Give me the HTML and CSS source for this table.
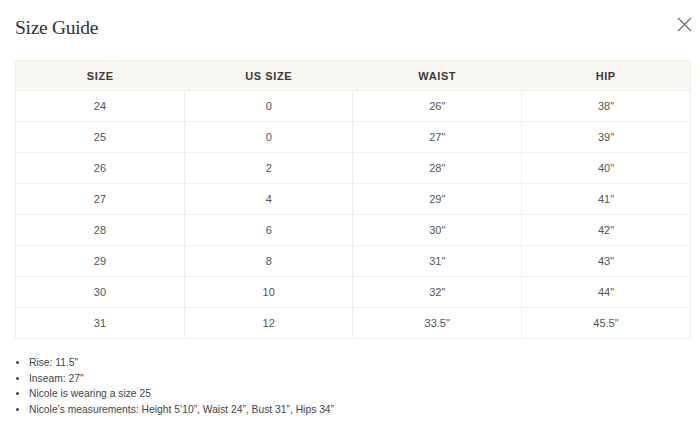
FILE: index.html
```html
<!DOCTYPE html>
<html>
<head>
<meta charset="utf-8">
<link rel="stylesheet" href="styles.css">
</head>
<body>
<div class="modal">
  <div class="head">
    <h1 class="title">Size Guide</h1>
    <button class="close" aria-label="Close">
      <svg width="15" height="15" viewBox="0 0 15 15"><path d="M1 1L14 14M14 1L1 14" stroke="#666" stroke-width="1.1" fill="none"/></svg>
    </button>
  </div>
  <table class="guide">
    <thead>
      <tr><th>SIZE</th><th>US SIZE</th><th>WAIST</th><th>HIP</th></tr>
    </thead>
    <tbody>
      <tr><td>24</td><td>0</td><td>26"</td><td>38"</td></tr>
      <tr><td>25</td><td>0</td><td>27"</td><td>39"</td></tr>
      <tr><td>26</td><td>2</td><td>28"</td><td>40"</td></tr>
      <tr><td>27</td><td>4</td><td>29"</td><td>41"</td></tr>
      <tr><td>28</td><td>6</td><td>30"</td><td>42"</td></tr>
      <tr><td>29</td><td>8</td><td>31"</td><td>43"</td></tr>
      <tr><td>30</td><td>10</td><td>32"</td><td>44"</td></tr>
      <tr><td>31</td><td>12</td><td>33.5"</td><td>45.5"</td></tr>
    </tbody>
  </table>
  <ul class="notes">
    <li>Rise: 11.5"</li>
    <li>Inseam: 27"</li>
    <li>Nicole is wearing a size 25</li>
    <li>Nicole’s measurements: Height 5’10”, Waist 24”, Bust 31”, Hips 34”</li>
  </ul>
</div>
</body>
</html>
```
FILE: styles.css
```css
html, body {
  margin: 0;
  padding: 0;
  background: #fff;
}
.modal {
  padding: 0 9px 0 15px;
  font-family: "Liberation Sans", Arial, sans-serif;
  color: #555;
}
.head {
  display: flex;
  justify-content: space-between;
  align-items: flex-start;
  height: 60px;
}
.title {
  margin: 16px 0 0 0;
  font-family: "Liberation Serif", "Times New Roman", serif;
  font-weight: normal;
  font-size: 19.5px;
  line-height: 24px;
  color: #333;
  letter-spacing: -0.3px;
}
.close {
  margin-top: 17px;
  margin-right: -1px;
  padding: 0;
  border: 0;
  background: none;
  width: 15px;
  height: 15px;
  display: block;
}
.close svg { display: block; }
.guide {
  width: 676px;
  border-collapse: collapse;
  table-layout: fixed;
  border: 1px solid #f3f0e8;
}
.guide th, .guide td {
  width: 25%;
  text-align: center;
  font-size: 11px;
  padding: 0;
  color: #555;
}
.guide th {
  background: #f9f7f2;
  height: 29px;
  font-weight: bold;
  color: #3a3a3a;
  letter-spacing: 0.6px;
}
.guide td {
  height: 30px;
  border: 1px solid #f3f0e8;
}
.notes {
  margin: 16px 0 0 0;
  padding: 0 0 0 14px;
  font-size: 10.3px;
  line-height: 15.6px;
  color: #444;
}
.notes li { padding-left: 0; }
```
